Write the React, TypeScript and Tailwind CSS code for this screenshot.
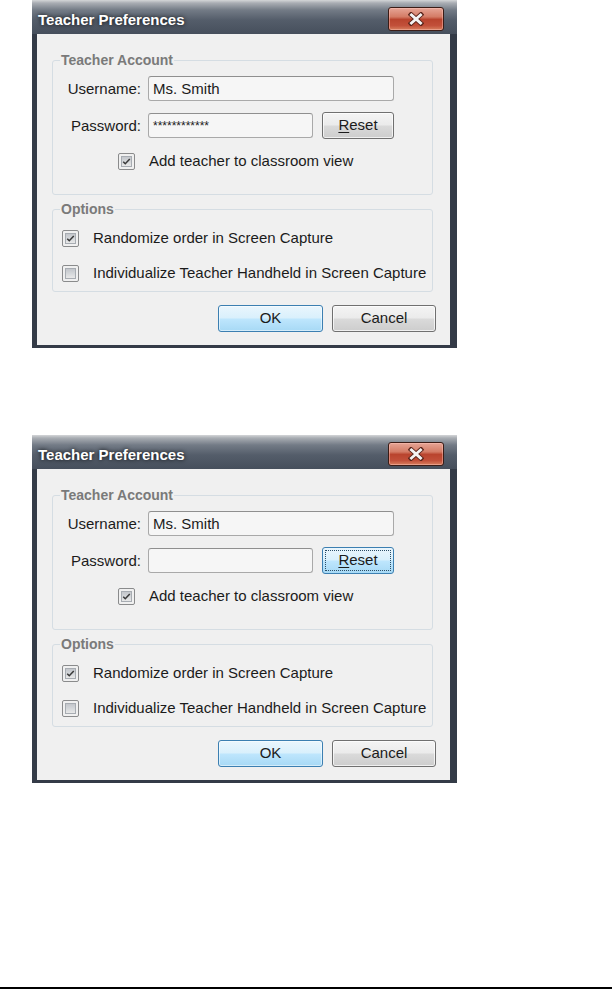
import React from "react"

const font = "font-['Liberation_Sans',Arial,sans-serif]"

function CheckBox({ checked }: { checked: boolean }) {
  return (
    <div className="flex h-[17px] w-[17px] shrink-0 items-center justify-center rounded-[2px] border border-[#8a8b8c] bg-[#f0f0f0] p-[2px]">
      <div className="flex h-full w-full items-center justify-center border border-[#a7acb2] bg-[linear-gradient(to_bottom,#c3c6cb_0%,#d4d7da_50%,#e8e8e8_100%)]">
        {checked && (
          <svg width="11" height="9" viewBox="0 0 11 9">
            <path d="M1.5 4.8 L4 7.2 L9.5 1.5" fill="none" stroke="#3a3a3a" strokeWidth="1.9" />
          </svg>
        )}
      </div>
    </div>
  )
}

function CloseButton() {
  return (
    <div className="ml-auto mr-[13px] mt-[7px] flex h-[24px] w-[56px] items-center justify-center self-start rounded-[3px] border border-[#3b1c16] bg-[linear-gradient(to_bottom,#e6a596_0%,#d47c66_40%,#b9442e_52%,#c2503a_80%,#d8805f_100%)] shadow-[inset_0_0_0_1px_rgba(255,200,190,0.45)]">
      <svg width="16" height="14" viewBox="0 0 16 14">
        <path d="M3 2.5 L13 11.5 M13 2.5 L3 11.5" stroke="#5a241a" strokeWidth="4.6" strokeLinecap="square" />
        <path d="M3.4 2.9 L12.6 11.1 M12.6 2.9 L3.4 11.1" stroke="#f4f4f4" strokeWidth="2.8" strokeLinecap="square" />
      </svg>
    </div>
  )
}

function Dialog({ password, focused }: { password: string; focused?: boolean }) {
  const btn =
    "flex h-[27px] items-center justify-center rounded-[3px] border border-[#707070] bg-[linear-gradient(to_bottom,#f4f4f4_0%,#ebebeb_48%,#dadada_52%,#cdcdcd_100%)] shadow-[inset_0_0_0_1px_rgba(255,255,255,0.7)] text-[15px] text-[#1b1b1b]"
  return (
    <div className={`flex w-[425px] flex-col bg-[#343b47] ${font}`}>
      <div className="flex h-[34px] items-start bg-[linear-gradient(to_bottom,#d4d6d8_0px,#a9adb3_3px,#737b86_10px,#545d6a_20px,#464f5c_34px)]">
        <span className="mt-[11px] ml-[6px] text-[15px] font-bold leading-[18px] text-white [text-shadow:0_0_4px_rgba(0,0,0,0.9)]">
          Teacher Preferences
        </span>
        <CloseButton />
      </div>
      <div className="mb-[3px] ml-[5px] mr-[7px] bg-[#f0f0f0] pl-[15px] pr-[17px] pb-[13px] pt-[18px] text-[15px] text-[#1b1b1b]">
        <fieldset className="rounded-[3px] border border-[#d5dde3] pb-[24px]">
          <legend className="ml-[7px] px-[1px] text-[14px] font-bold leading-[16px] text-[#7a7a7a]">Teacher Account</legend>
          <div className="mt-[8px] flex h-[25px] items-center">
            <span className="w-[88px] pt-[2px] text-right">Username:</span>
            <div className="ml-[7px] flex h-[25px] w-[246px] items-center rounded-[3px] border border-[#a9a9a9] border-t-[#8f8f8f] bg-[#f6f6f6] pl-[4px] pt-[1px]">
              Ms. Smith
            </div>
          </div>
          <div className="mt-[11px] flex h-[27px] items-center">
            <span className="w-[88px] pt-[2px] text-right">Password:</span>
            <div className="ml-[7px] flex h-[25px] w-[165px] items-center rounded-[3px] border border-[#a9a9a9] border-t-[#8f8f8f] bg-[#f6f6f6] pl-[4px] text-[12px]">
              {password}
            </div>
            {focused ? (
              <div className="ml-[9px] flex h-[27px] w-[72px] items-center justify-center rounded-[3px] border border-[#3c7fb1] bg-[linear-gradient(to_bottom,#eaf6fd_0%,#d9f0fc_48%,#bee6fd_52%,#a7d9f5_100%)] outline-1 outline-dotted -outline-offset-4 outline-[#2b4d66] text-[15px] text-[#1b1b1b]">
                <span className="underline underline-offset-2">R</span>eset
              </div>
            ) : (
              <div className={`${btn} ml-[9px] w-[72px]`}>
                <span className="underline underline-offset-2">R</span>eset
              </div>
            )}
          </div>
          <div className="mt-[14px] flex h-[17px] items-center gap-[14px] pl-[65px]">
            <CheckBox checked />
            <span>Add teacher to classroom view</span>
          </div>
        </fieldset>
        <fieldset className="mt-[6px] rounded-[3px] border border-[#d5dde3] pb-[9px]">
          <legend className="ml-[7px] px-[1px] text-[14px] font-bold leading-[16px] text-[#7a7a7a]">Options</legend>
          <div className="mt-[13px] flex h-[17px] items-center gap-[14px] pl-[9px]">
            <CheckBox checked />
            <span>Randomize order in Screen Capture</span>
          </div>
          <div className="mt-[18px] flex h-[17px] items-center gap-[14px] pl-[9px]">
            <CheckBox checked={false} />
            <span>Individualize Teacher Handheld in Screen Capture</span>
          </div>
        </fieldset>
        <div className="-mr-[3px] mt-[13px] flex justify-end gap-[9px]">
          <div className="flex h-[27px] w-[105px] items-center justify-center rounded-[3px] border border-[#3c7fb1] bg-[linear-gradient(to_bottom,#eaf6fd_0%,#d9f0fc_48%,#bee6fd_52%,#a7d9f5_100%)] shadow-[inset_0_0_0_1px_rgba(255,255,255,0.5)] text-[15px] text-[#1b1b1b]">
            OK
          </div>
          <div className={`${btn} w-[104px]`}>Cancel</div>
        </div>
      </div>
    </div>
  )
}

export default function App() {
  return (
    <div className="flex h-[989px] w-[612px] flex-col bg-white pl-[32px]">
      <Dialog password="************" />
      <div className="mt-[87px]">
        <Dialog password="" focused />
      </div>
      <div className="-ml-[32px] mt-[204px] h-[2px] w-[612px] bg-black" />
    </div>
  )
}
